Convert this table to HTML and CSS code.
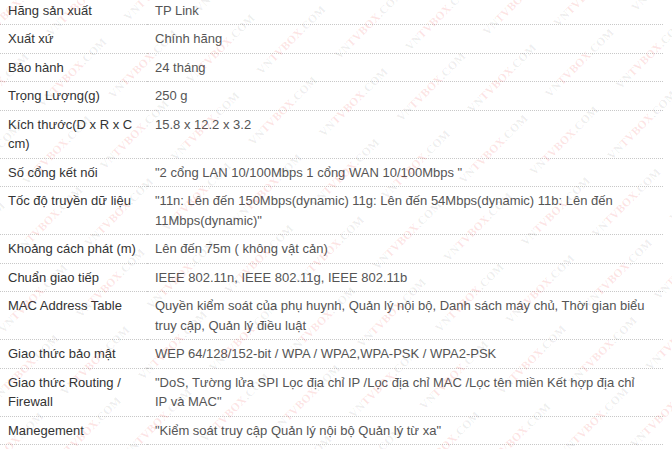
FILE: index.html
```html
<!DOCTYPE html>
<html lang="vi">
<head>
    <meta charset="UTF-8">
    <meta name="viewport" content="width=device-width, initial-scale=1.0">
    <title>Thông số kỹ thuật</title>
    <link rel="stylesheet" href="styles.css">
</head>
<body>
    <div class="page">
        <table class="specs">
            <tr><td class="label">Hãng sản xuất</td><td class="value">TP Link</td></tr>
            <tr><td class="label">Xuất xứ</td><td class="value">Chính hãng</td></tr>
            <tr><td class="label">Bảo hành</td><td class="value">24 tháng</td></tr>
            <tr><td class="label">Trọng Lượng(g)</td><td class="value">250 g</td></tr>
            <tr><td class="label">Kích thước(D x R x C cm)</td><td class="value">15.8 x 12.2 x 3.2</td></tr>
            <tr><td class="label">Số cổng kết nối</td><td class="value">"2 cổng LAN 10/100Mbps 1 cổng WAN 10/100Mbps "</td></tr>
            <tr><td class="label">Tốc độ truyền dữ liệu</td><td class="value">"11n: Lên đến 150Mbps(dynamic) 11g: Lên đến 54Mbps(dynamic) 11b: Lên đến 11Mbps(dynamic)"</td></tr>
            <tr><td class="label">Khoảng cách phát (m)</td><td class="value">Lên đến 75m ( không vật cản)</td></tr>
            <tr><td class="label">Chuẩn giao tiếp</td><td class="value">IEEE 802.11n, IEEE 802.11g, IEEE 802.11b</td></tr>
            <tr><td class="label">MAC Address Table</td><td class="value">Quyền kiểm soát của phụ huynh, Quản lý nội bộ, Danh sách máy chủ, Thời gian biểu truy cập, Quản lý điều luật</td></tr>
            <tr><td class="label">Giao thức bảo mật</td><td class="value">WEP 64/128/152-bit / WPA / WPA2,WPA-PSK / WPA2-PSK</td></tr>
            <tr><td class="label">Giao thức Routing / Firewall</td><td class="value">"DoS, Tường lửa SPI Lọc địa chỉ IP /Lọc địa chỉ MAC /Lọc tên miền Kết hợp địa chỉ IP và MAC"</td></tr>
            <tr><td class="label">Manegement</td><td class="value">"Kiểm soát truy cập Quản lý nội bộ Quản lý từ xa"</td></tr>
        </table>
        <div class="watermark"><div class="wm-grid" id="wmGrid"></div></div>
    </div>
    <script>
        // lặp lại chữ watermark theo đường chéo
        var grid = document.getElementById('wmGrid');
        for (var i = 0; i < 38; i++) {
            var line = document.createElement('div');
            line.className = 'wm-line';
            if (i % 2) line.classList.add('shift');
            var html = '';
            for (var j = 0; j < 15; j++) {
                html += '<span class="wm">VN<b>TVBOX</b>.COM</span>';
            }
            line.innerHTML = html;
            grid.appendChild(line);
        }
    </script>
</body>
</html>
```

FILE: styles.css
```css
body {
    margin: 0;
    padding: 0;
    background-color: #fff;
    font-family: "Liberation Sans", Arial, sans-serif;
    font-size: 13px;
    overflow: hidden;
}
.page {
    position: relative;
    width: 672px;
    height: 449px;
    overflow: hidden;
}
.specs {
    width: 663px;
    margin-top: -3.5px;
    border-collapse: collapse;
    border-spacing: 0;
}
.specs td {
    padding: 4px 8px;
    line-height: 19.5px;
    vertical-align: top;
    border-bottom: 1px dotted #c8c8c8;
}
.specs .label {
    width: 131px;
    color: #333;
}
.specs .value {
    padding-right: 17px;
    color: #555;
}
.watermark {
    position: absolute;
    top: 0;
    left: 0;
    right: 0;
    bottom: 0;
    pointer-events: none;
    overflow: hidden;
}
.wm-grid {
    position: absolute;
    top: -576px;
    left: -464px;
    width: 1600px;
    height: 1600px;
    transform: rotate(-45deg);
    transform-origin: center;
}
.wm-line {
    display: flex;
    gap: 30px;
    height: 44px;
    align-items: center;
    white-space: nowrap;
}
.wm-line.shift {
    margin-left: -56px;
}
.wm {
    font-family: "Liberation Serif", serif;
    font-weight: bold;
    font-size: 11.5px;
    letter-spacing: 0.3px;
    color: rgba(0, 0, 0, 0.08);
}
.wm b {
    color: rgba(235, 40, 40, 0.13);
}
```
